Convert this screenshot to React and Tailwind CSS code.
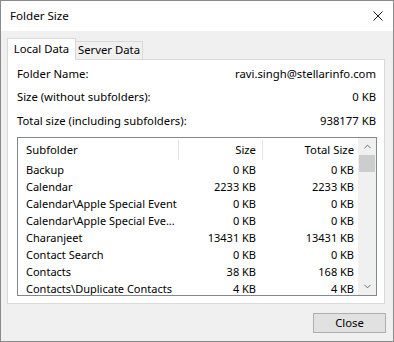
import { ChevronUp, ChevronDown } from "lucide-react";

const rows = [
  { name: "Backup", size: "0 KB", total: "0 KB" },
  { name: "Calendar", size: "2233 KB", total: "2233 KB" },
  { name: "Calendar\\Apple Special Event", size: "0 KB", total: "0 KB" },
  { name: "Calendar\\Apple Special Eve...", size: "0 KB", total: "0 KB" },
  { name: "Charanjeet", size: "13431 KB", total: "13431 KB" },
  { name: "Contact Search", size: "0 KB", total: "0 KB" },
  { name: "Contacts", size: "38 KB", total: "168 KB" },
  { name: "Contacts\\Duplicate Contacts", size: "4 KB", total: "4 KB" },
];

const info = [
  { label: "Folder Name:", value: "ravi.singh@stellarinfo.com", h: "h-[23px]" },
  { label: "Size (without subfolders):", value: "0 KB", h: "h-[23px]" },
  { label: "Total size (including subfolders):", value: "938177 KB", h: "h-[24px]" },
];

export default function App() {
  return (
    <div
      className="w-[394px] h-[342px] border border-[#8a8a8a] flex flex-col text-[11.3px] text-black overflow-hidden"
      style={{ fontFamily: '"Noto Sans", "Liberation Sans", sans-serif' }}
    >
      {/* Title bar */}
      <div className="h-[30px] bg-white flex items-center justify-between pl-[9px] pr-[9px]">
        <span className="text-[11.6px]">Folder Size</span>
        <svg width="10" height="10" viewBox="0 0 10 10" className="mr-[1px]">
          <path d="M0.5 0.5 L9.5 9.5 M9.5 0.5 L0.5 9.5" stroke="#1a1a1a" strokeWidth="1" />
        </svg>
      </div>

      {/* Body */}
      <div className="flex-1 bg-[#f0f0f0] pl-[6px] pr-[8px] pt-[7px] flex flex-col">
        {/* Tabs */}
        <div className="flex items-end h-[21px]">
          <div className="w-[69px] h-[22px] bg-white border border-b-0 border-[#d9d9d9] flex items-center justify-center relative z-10 -mb-[1px]">
            Local Data
          </div>
          <div className="w-[67px] h-[18px] border border-l-0 border-b-0 border-[#d9d9d9] flex items-center justify-center">
            Server Data
          </div>
        </div>

        {/* Panel */}
        <div className="h-[245px] bg-white border border-[#d9d9d9] pl-[9px] pr-[7px] pt-[3px] flex flex-col">
          {info.map((r) => (
            <div key={r.label} className={`${r.h} flex items-center justify-between pr-[1px]`}>
              <span>{r.label}</span>
              <span>{r.value}</span>
            </div>
          ))}

          {/* List */}
          <div className="mt-[4px] h-[159px] border border-[#828790] flex text-[11px]">
            <div className="w-[340px] flex flex-col overflow-hidden">
              <div className="h-[24px] shrink-0 flex items-center text-[11.3px]">
                <div className="w-[160px] pl-[8px]">Subfolder</div>
                <div className="w-[1px] h-[20px] bg-[#e5e5e5]" />
                <div className="w-[83px] text-right pr-[6px]">Size</div>
                <div className="w-[1px] h-[20px] bg-[#e5e5e5]" />
                <div className="flex-1 text-right pr-[4px]">Total Size</div>
              </div>
              {rows.map((r) => (
                <div key={r.name} className="h-[17px] shrink-0 flex items-center">
                  <div className="w-[161px] pl-[8px] whitespace-nowrap overflow-hidden">{r.name}</div>
                  <div className="w-[77px] text-right">{r.size}</div>
                  <div className="flex-1 text-right pr-[4px]">{r.total}</div>
                </div>
              ))}
            </div>

            {/* Scrollbar */}
            <div className="w-[18px] bg-[#f0f0f0] flex flex-col">
              <div className="h-[17px] flex items-center justify-center">
                <ChevronUp size={11} strokeWidth={2} color="#606060" />
              </div>
              <div className="h-[17px] mx-[1px] bg-[#cdcdcd]" />
              <div className="flex-1" />
              <div className="h-[17px] flex items-center justify-center">
                <ChevronDown size={11} strokeWidth={2} color="#606060" />
              </div>
            </div>
          </div>
        </div>

        {/* Footer */}
        <div className="flex justify-end mt-[9px] -mr-[1px]">
          <button className="w-[73px] h-[20px] bg-[#e1e1e1] border border-[#adadad] flex items-center justify-center">
            Close
          </button>
        </div>
      </div>
    </div>
  );
}
